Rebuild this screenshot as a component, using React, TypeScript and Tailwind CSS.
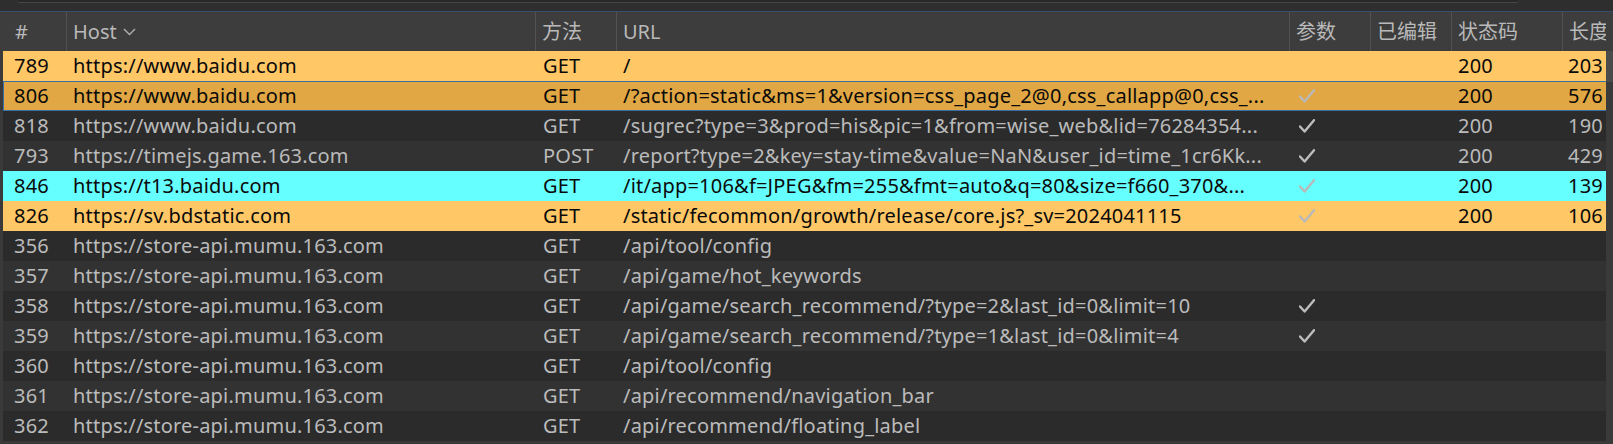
import React from "react";

type Tone = "orange" | "selected" | "cyan" | undefined;

type Row = {
  id: number;
  host: string;
  method: string;
  url: string;
  params?: boolean;
  status?: string;
  length?: string;
  tone?: Tone;
};

const rows: Row[] = [
  { id: 789, host: "https://www.baidu.com", method: "GET", url: "/", status: "200", length: "203", tone: "orange" },
  { id: 806, host: "https://www.baidu.com", method: "GET", url: "/?action=static&ms=1&version=css_page_2@0,css_callapp@0,css_...", params: true, status: "200", length: "576", tone: "selected" },
  { id: 818, host: "https://www.baidu.com", method: "GET", url: "/sugrec?type=3&prod=his&pic=1&from=wise_web&lid=76284354...", params: true, status: "200", length: "190" },
  { id: 793, host: "https://timejs.game.163.com", method: "POST", url: "/report?type=2&key=stay-time&value=NaN&user_id=time_1cr6Kk...", params: true, status: "200", length: "429" },
  { id: 846, host: "https://t13.baidu.com", method: "GET", url: "/it/app=106&f=JPEG&fm=255&fmt=auto&q=80&size=f660_370&...", params: true, status: "200", length: "139", tone: "cyan" },
  { id: 826, host: "https://sv.bdstatic.com", method: "GET", url: "/static/fecommon/growth/release/core.js?_sv=2024041115", params: true, status: "200", length: "106", tone: "orange" },
  { id: 356, host: "https://store-api.mumu.163.com", method: "GET", url: "/api/tool/config" },
  { id: 357, host: "https://store-api.mumu.163.com", method: "GET", url: "/api/game/hot_keywords" },
  { id: 358, host: "https://store-api.mumu.163.com", method: "GET", url: "/api/game/search_recommend/?type=2&last_id=0&limit=10", params: true },
  { id: 359, host: "https://store-api.mumu.163.com", method: "GET", url: "/api/game/search_recommend/?type=1&last_id=0&limit=4", params: true },
  { id: 360, host: "https://store-api.mumu.163.com", method: "GET", url: "/api/tool/config" },
  { id: 361, host: "https://store-api.mumu.163.com", method: "GET", url: "/api/recommend/navigation_bar" },
  { id: 362, host: "https://store-api.mumu.163.com", method: "GET", url: "/api/recommend/floating_label" },
];

const Check = ({ light }: { light: boolean }) => (
  <svg width="16" height="14" viewBox="0 0 16 14" className={light ? "text-[#b9b9b9]" : "text-[#bdbdbd]"}>
    <polyline points="1,7.5 5.6,12.5 15,1.2" fill="none" stroke="currentColor" strokeWidth="2.4" strokeLinecap="round" strokeLinejoin="round" />
  </svg>
);

// row colour by highlight / stripe
const rowClass = (tone: Tone, i: number) => {
  if (tone === "orange") return "bg-[#ffc766] text-[#0a0a0a]";
  if (tone === "selected")
    return "bg-[#e0a744] text-[#0a0a0a] shadow-[inset_1px_1px_0_#3a6ea6,inset_0_-1px_0_#3a6ea6]";
  if (tone === "cyan") return "bg-[#66ffff] text-[#0a0a0a]";
  return i % 2 === 0 ? "bg-[#2b2b2b] text-[#bbbbbb]" : "bg-[#323232] text-[#bbbbbb]";
};

export default function App() {
  return (
    <div className="w-[1613px] h-[444px] overflow-hidden bg-[#3a3a3a] font-['Noto_Sans','Noto_Sans_CJK_SC',sans-serif] text-[20px]">
      {/* search field edge */}
      <div className="h-[11px] bg-[#2e2e2e] pl-[17px] pr-[94px]">
        <div className="h-[3px] rounded-b-[4px] bg-[#292929] border-b border-[#464646]" />
      </div>
      <div className="h-px bg-[#34506c]" />

      {/* header */}
      <div className="flex h-[39px] bg-[#3d3d3d] text-[#b9b9b9] leading-[39px] pl-[3px]">
        <div className="w-[63px] pl-[12px]">#</div>
        <div className="w-[469px] border-l border-[#525252] pl-[6px] flex items-center gap-[6px]">
          <span>Host</span>
          <svg width="13" height="8" viewBox="0 0 13 8">
            <polyline points="1,1 6.5,6.5 12,1" fill="none" stroke="#b0b0b0" strokeWidth="1.4" />
          </svg>
        </div>
        <div className="w-[81px] border-l border-[#525252] pl-[6px]">方法</div>
        <div className="w-[673px] border-l border-[#525252] pl-[6px]">URL</div>
        <div className="w-[81px] border-l border-[#525252] pl-[6px]">参数</div>
        <div className="w-[81px] border-l border-[#525252] pl-[6px]">已编辑</div>
        <div className="w-[111px] border-l border-[#525252] pl-[6px]">状态码</div>
        <div className="w-[44px] border-l border-[#525252] pl-[6px] overflow-hidden whitespace-nowrap">长度</div>
      </div>

      <div className="flex pl-[3px] tracking-[0.2px]">
        <div className="w-[1603px]">
          {rows.map((r, i) => (
            <div key={r.id} className={`flex h-[30px] items-center ${rowClass(r.tone, i)}`}>
              <div className="w-[63px] pl-[11px]">{r.id}</div>
              <div className="w-[470px] pl-[7px] whitespace-nowrap">{r.host}</div>
              <div className="w-[81px] pl-[7px]">{r.method}</div>
              <div className="w-[673px] pl-[6px] whitespace-nowrap overflow-hidden">{r.url}</div>
              <div className="w-[81px] pl-[9px] flex items-center">{r.params && <Check light={!!r.tone} />}</div>
              <div className="w-[81px]" />
              <div className="w-[111px] pl-[6px]">{r.status}</div>
              <div className="w-[43px] text-right pr-[3px] whitespace-nowrap">{r.length}</div>
            </div>
          ))}
        </div>
        <div className="w-[7px] bg-[#3a3a3a]">
          <div className="h-[31px] bg-[#4b4b4b]" />
        </div>
      </div>
    </div>
  );
}
